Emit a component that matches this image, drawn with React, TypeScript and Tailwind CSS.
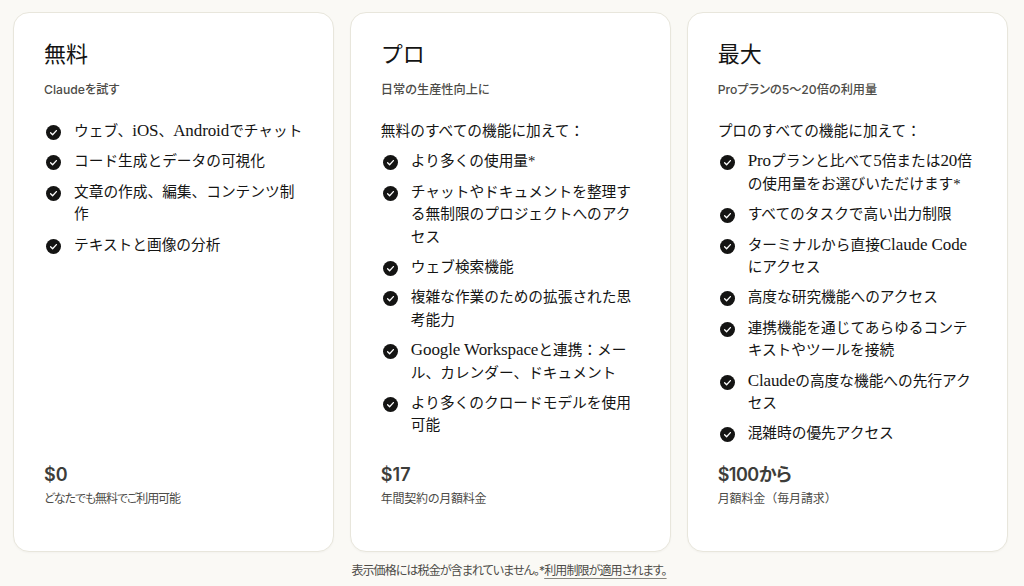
const serif = "font-['Liberation_Serif','Noto_Sans_CJK_JP',serif]";
const sans = "font-['Inter','Noto_Sans_CJK_JP',sans-serif]";
const palt = "[font-feature-settings:'palt']";

function Check() {
  return (
    <svg width="15" height="15" viewBox="0 0 15 15" className="shrink-0 mt-[5px]">
      <circle cx="7.5" cy="7.5" r="7.5" fill="#141413" />
      <path d="M4.6 7.8l2 2 3.8-4.2" fill="none" stroke="#fff" strokeWidth="1.3" strokeLinecap="round" strokeLinejoin="round" />
    </svg>
  );
}

function Mixed({ text }: { text: string }) {
  const parts = text.split(/([A-Za-z0-9 ]+)/);
  return (
    <>
      {parts.map((p, i) =>
        i % 2 === 1 ? (
          <span key={i} className="text-[17px] tracking-[-0.1px]">{p}</span>
        ) : (
          <span key={i}>{p}</span>
        ),
      )}
    </>
  );
}

type Plan = {
  title: string;
  sub: string;
  lead?: string;
  items: string[][];
  price: string;
  priceClass: string;
  note: string;
  noteClass: string;
};

const plans: Plan[] = [
  {
    title: "無料",
    sub: "Claudeを試す",
    items: [["ウェブ、iOS、Androidでチャット"], ["コード生成とデータの可視化"], ["文章の作成、編集、コンテンツ制", "作"], ["テキストと画像の分析"]],
    price: "$0",
    priceClass: "",
    note: "どなたでも無料でご利用可能",
    noteClass: "text-[12px] tracking-[-1.1px] [font-feature-settings:'palt']",
  },
  {
    title: "プロ",
    sub: "日常の生産性向上に",
    lead: "無料のすべての機能に加えて：",
    items: [
      ["より多くの使用量*"],
      ["チャットやドキュメントを整理す", "る無制限のプロジェクトへのアク", "セス"],
      ["ウェブ検索機能"],
      ["複雑な作業のための拡張された思", "考能力"],
      ["Google Workspaceと連携：メー", "ル、カレンダー、ドキュメント"],
      ["より多くのクロードモデルを使用", "可能"],
    ],
    price: "$17",
    priceClass: "",
    note: "年間契約の月額料金",
    noteClass: "text-[12px] tracking-[-0.25px] [font-feature-settings:'palt']",
  },
  {
    title: "最大",
    sub: "Proプランの5〜20倍の利用量",
    lead: "プロのすべての機能に加えて：",
    items: [
      ["Proプランと比べて5倍または20倍", "の使用量をお選びいただけます*"],
      ["すべてのタスクで高い出力制限"],
      ["ターミナルから直接Claude Code", "にアクセス"],
      ["高度な研究機能へのアクセス"],
      ["連携機能を通じてあらゆるコンテ", "キストやツールを接続"],
      ["Claudeの高度な機能への先行アク", "セス"],
      ["混雑時の優先アクセス"],
    ],
    price: "$100から",
    priceClass: "tracking-[-0.5px]",
    note: "月額料金（毎月請求）",
    noteClass: "text-[12px] tracking-[-0.1px]",
  },
];

function Card({ plan }: { plan: Plan }) {
  return (
    <div className="h-[540px] flex flex-col bg-white border border-[#e8e6dc] rounded-[16px] px-[30px] pt-[27px] shadow-[0_1px_2px_rgba(0,0,0,0.03)]">
      <h2 className={`${serif} text-[22px] leading-[30px] text-[#141413]`}>{plan.title}</h2>
      <p className={`${sans} ${palt} text-[12.2px] leading-[18px] mt-[11px] font-medium text-[#4d4c48]`}>{plan.sub}</p>
      {plan.lead && <p className={`${serif} text-[14.7px] leading-[22.4px] mt-[21px] text-[#141413]`}>{plan.lead}</p>}
      <ul className={`flex flex-col gap-[8px] ${plan.lead ? "mt-[8px]" : "mt-[21px]"}`}>
        {plan.items.map((lines) => (
          <li key={lines[0]} className="flex gap-[13px] pl-[2px]">
            <Check />
            <span className={`${serif} text-[14.7px] leading-[22.4px] text-[#141413]`}>
              {lines.map((l) => (
                <span key={l} className="block whitespace-nowrap h-[22.4px]">
                  <Mixed text={l} />
                </span>
              ))}
            </span>
          </li>
        ))}
      </ul>
      <div className={`mt-auto pb-[43px] ${sans}`}>
        <p className={`${palt} ${plan.priceClass} text-[18px] leading-[24px] font-semibold text-[#3d3d3a]`}>{plan.price}</p>
        <p className={`${plan.noteClass} leading-[18px] mt-[3px] text-[#4d4c48]`}>{plan.note}</p>
      </div>
    </div>
  );
}

export default function App() {
  return (
    <div className="w-[1024px] h-[586px] overflow-hidden bg-[#faf9f5] pl-[13px] pr-[16px] pt-[12px]">
      <div className="grid grid-cols-3 gap-[15.5px]">
        {plans.map((p) => (
          <Card key={p.title} plan={p} />
        ))}
      </div>
      <p className={`${sans} ${palt} text-center text-[12px] tracking-[-0.9px] leading-[18px] mt-[10px] pr-[3px] text-[#4d4c48]`}>
        表示価格には税金が含まれていません。*
        <span className="underline decoration-[#87867f] underline-offset-3">利用制限が適用されます。</span>
      </p>
    </div>
  );
}
